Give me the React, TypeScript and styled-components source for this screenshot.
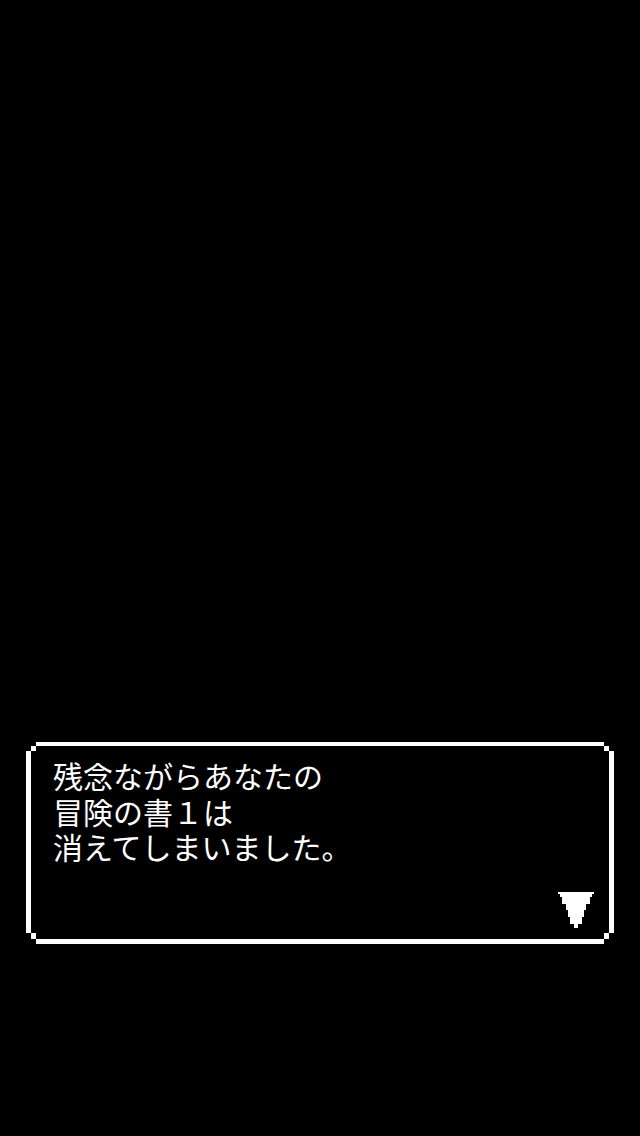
import React from "react";
import styled, { createGlobalStyle } from "styled-components";

const GlobalStyle = createGlobalStyle`
  html, body {
    margin: 0;
    padding: 0;
    background: #000;
  }
  #root {
    min-height: 1136px;
  }
`;

const Screen = styled.main`
  width: 640px;
  height: 1136px;
  background: #000;
  display: flex;
  flex-direction: column;
  justify-content: flex-end;
  align-items: flex-start;
  padding: 0 0 192px 26px;
  box-sizing: border-box;
`;

const Frame = styled.section`
  width: 588px;
  height: 202px;
  box-sizing: border-box;
  padding: 4px 5px 5px 5px;
  background: #fff;
  display: flex;
  clip-path: polygon(
    10px 0, 578px 0, 578px 4px, 583px 4px, 583px 9px, 588px 9px,
    588px 191px, 583px 191px, 583px 197px, 578px 197px, 578px 202px,
    10px 202px, 10px 197px, 5px 197px, 5px 191px, 0 191px,
    0 9px, 5px 9px, 5px 4px, 10px 4px
  );
`;

const Panel = styled.div`
  flex: 1;
  background: #000;
  box-sizing: border-box;
  padding: 12px 15px 11px 22px;
  display: flex;
  flex-direction: column;
  clip-path: polygon(
    5px 0, calc(100% - 5px) 0, calc(100% - 5px) 5px, 100% 5px,
    100% calc(100% - 6px), calc(100% - 5px) calc(100% - 6px), calc(100% - 5px) 100%,
    5px 100%, 5px calc(100% - 6px), 0 calc(100% - 6px), 0 5px, 5px 5px
  );
`;

const Message = styled.p`
  margin: 0;
  color: #fff;
  font-family: "Noto Sans CJK JP", "Noto Sans", sans-serif;
  font-size: 30px;
  line-height: 35.5px;
  font-weight: 400;
  letter-spacing: 0;
  white-space: pre;
`;

const Cursor = styled.svg`
  margin-top: auto;
  align-self: flex-end;
  display: block;
  width: 36px;
  height: 36px;
`;

export default function App() {
  return (
    <>
      <GlobalStyle />
      <Screen>
        <Frame>
          <Panel>
            <Message>{"残念ながらあなたの\n冒険の書１は\n消えてしまいました。"}</Message>
            <Cursor viewBox="0 0 36 36" shapeRendering="crispEdges">
              <polygon
                fill="#fff"
                points="0,0 36,0 36,2 34,2 34,5 32,5 32,12 28,12 28,18 26,18 26,25 24,25 24,32 20,32 20,36 16,36 16,32 12,32 12,25 10,25 10,18 8,18 8,12 4,12 4,5 2,5 2,2 0,2"
              />
            </Cursor>
          </Panel>
        </Frame>
      </Screen>
    </>
  );
}
